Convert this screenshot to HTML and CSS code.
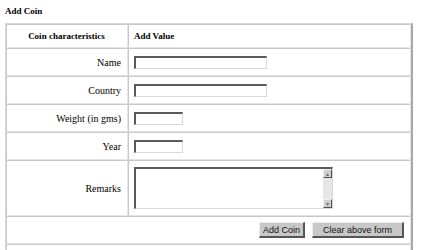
FILE: index.html
```html
<!DOCTYPE html>
<html lang="en">
<head>
    <meta charset="UTF-8">
    <title>Add Coin</title>
    <link rel="stylesheet" href="styles.css">
</head>
<body>
    <h4 class="title">Add Coin</h4>

    <form class="coin-form">
        <table class="coin-table">
            <tr class="head-row">
                <th class="label-col">Coin characteristics</th>
                <th class="value-col">Add Value</th>
            </tr>
            <tr>
                <td class="label">Name</td>
                <td><input type="text" class="field long"></td>
            </tr>
            <tr>
                <td class="label">Country</td>
                <td><input type="text" class="field long"></td>
            </tr>
            <tr>
                <td class="label">Weight (in gms)</td>
                <td><input type="text" class="field short"></td>
            </tr>
            <tr>
                <td class="label">Year</td>
                <td><input type="text" class="field short"></td>
            </tr>
            <tr class="remarks-row">
                <td class="label">Remarks</td>
                <td>
                    <div class="textarea">
                        <div class="textarea-body"></div>
                        <div class="scrollbar">
                            <span class="arrow up">&#9652;</span>
                            <span class="arrow down">&#9662;</span>
                        </div>
                    </div>
                </td>
            </tr>
            <tr class="button-row">
                <td colspan="2">
                    <div class="buttons">
                        <button type="button" class="btn">Add Coin</button>
                        <button type="button" class="btn wide">Clear above form</button>
                    </div>
                </td>
            </tr>
            <tr class="foot-row">
                <td colspan="2"></td>
            </tr>
        </table>
    </form>
</body>
</html>
```

FILE: styles.css
```css
* {
    box-sizing: border-box;
}

body {
    margin: 0;
    padding: 5px;
    background: #ffffff;
    font-family: "Liberation Serif", "DejaVu Serif", serif;
    font-size: 10px;
    color: #000000;
}

.title {
    margin: 0 0 6px 0;
    font-size: 9px;
    font-weight: bold;
    line-height: 12px;
}

.coin-table {
    width: 408px;
    border-collapse: separate;
    border-spacing: 0;
    border-top: 1px solid #d8d8d8;
    border-left: 1px solid #d8d8d8;
    border-right: 2px solid #a8a8a8;
    border-bottom: 1px solid #a8a8a8;
    font-family: "Liberation Serif", "DejaVu Serif", serif;
    font-size: 10px;
}

.coin-table th,
.coin-table td {
    border-top: 1px solid #c8c8c8;
    border-left: 1px solid #c8c8c8;
    border-right: 1px solid #e4e4e4;
    border-bottom: 1px solid #e4e4e4;
    padding: 0 6px 0 5px;
    height: 28px;
    vertical-align: middle;
}

.head-row th {
    height: 24px;
    font-size: 9px;
    font-weight: bold;
}

.label-col {
    width: 122px;
    text-align: center;
}

.value-col {
    text-align: left;
}

.label {
    text-align: right;
}

.field {
    display: block;
    height: 13px;
    padding: 0;
    border-top: 2px solid #5a5a5a;
    border-left: 2px solid #5a5a5a;
    border-right: 1px solid #d8d8d8;
    border-bottom: 1px solid #d8d8d8;
    background: #ffffff;
    font-size: 9px;
}

.long {
    width: 133px;
}

.short {
    width: 49px;
}

.remarks-row td {
    height: 56px;
}

.textarea {
    display: flex;
    width: 199px;
    height: 42px;
    border-top: 2px solid #5a5a5a;
    border-left: 2px solid #5a5a5a;
    border-right: 1px solid #d8d8d8;
    border-bottom: 1px solid #d8d8d8;
}

.textarea-body {
    flex: 1;
    background: #ffffff;
}

.scrollbar {
    width: 9px;
    background: #e6e6e6;
    display: flex;
    flex-direction: column;
    justify-content: space-between;
}

.arrow {
    display: block;
    height: 9px;
    background: #d0d0d0;
    border-right: 1px solid #505050;
    border-bottom: 1px solid #505050;
    border-top: 1px solid #f0f0f0;
    border-left: 1px solid #f0f0f0;
    font-family: "DejaVu Sans", sans-serif;
    font-size: 6px;
    line-height: 7px;
    text-align: center;
    color: #707070;
}

.button-row td {
    height: 28px;
    padding-right: 6px;
}

.buttons {
    display: flex;
    justify-content: flex-end;
    gap: 7px;
}

.btn {
    height: 16px;
    padding: 0;
    background: #c8c8c8;
    border-top: 1px solid #ececec;
    border-left: 1px solid #ececec;
    border-right: 2px solid #555555;
    border-bottom: 2px solid #555555;
    font-family: "Liberation Sans", Arial, sans-serif;
    font-size: 9px;
    color: #111111;
    width: 46px;
}

.btn.wide {
    width: 92px;
}

.foot-row td {
    height: 20px;
}
```
